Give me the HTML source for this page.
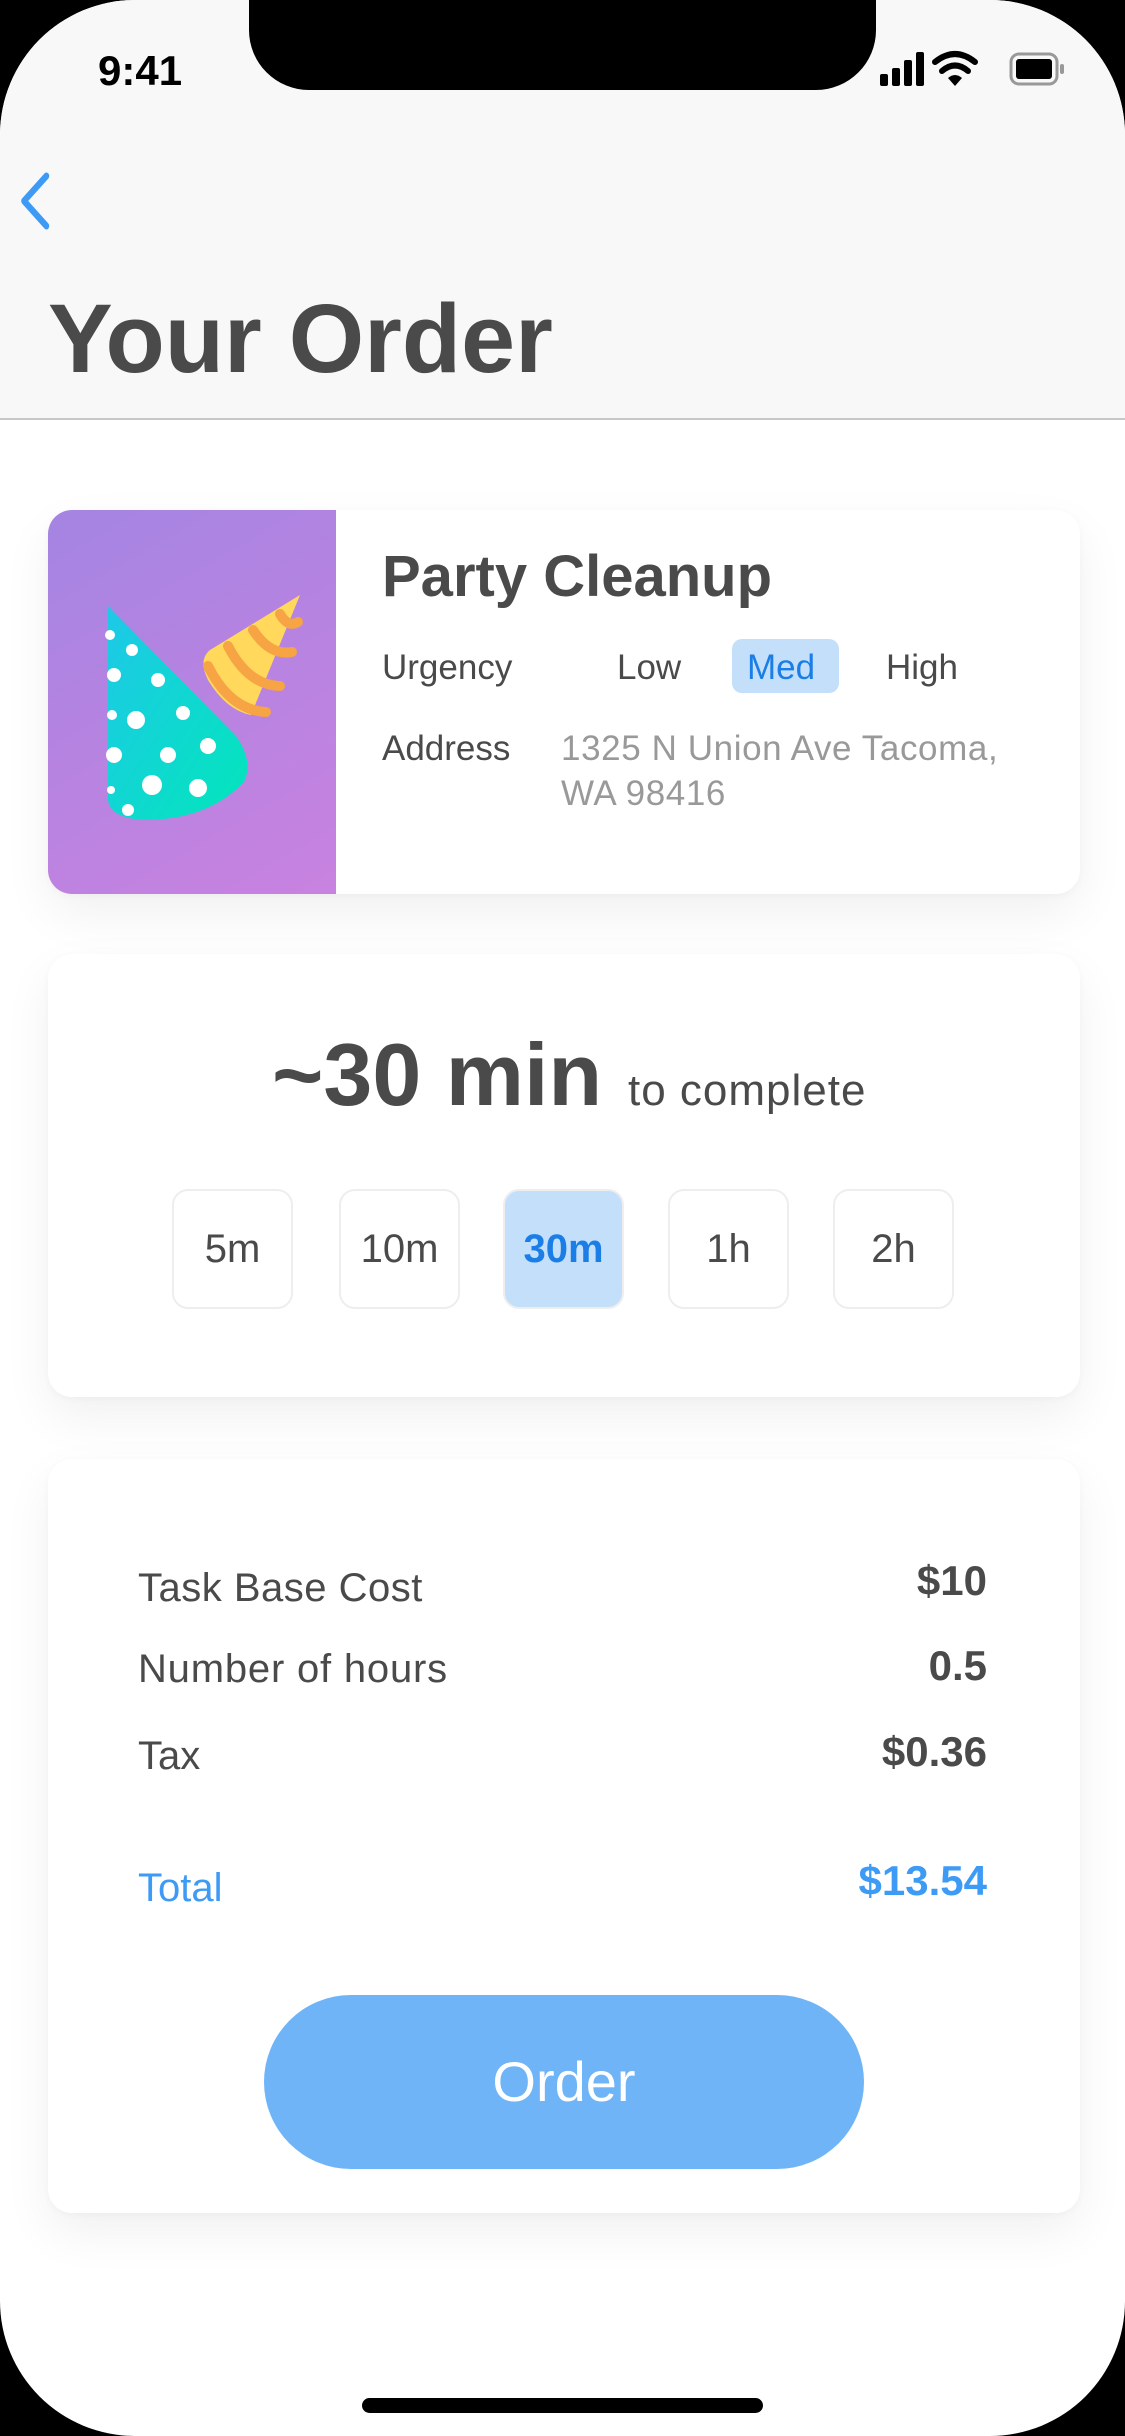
<!DOCTYPE html>
<html><head><meta charset="utf-8">
<style>
*{margin:0;padding:0;box-sizing:border-box}
html,body{width:1125px;height:2436px;background:#000;overflow:hidden}
#s{position:absolute;left:0;top:0;width:1125px;height:2436px;background:#fff;border-radius:135px;overflow:hidden;font-family:"Liberation Sans",sans-serif;color:#4a4a4a}
.t{position:absolute;white-space:nowrap;line-height:1}
.card{position:absolute;background:#fff;border-radius:24px;box-shadow:0 20px 50px rgba(0,0,0,0.06),0 2px 8px rgba(0,0,0,0.03)}
.box{position:absolute;top:1189px;width:121px;height:120px;border:2px solid #eee;border-radius:16px;background:#fff;font-size:40px;text-align:center;line-height:116px;color:#4a4a4a}
</style></head><body>
<div id="s">
<div style="position:absolute;left:0;top:0;width:1125px;height:420px;background:#f8f8f8;border-bottom:2px solid #c8c8c8"></div>
<div style="position:absolute;left:249px;top:-60px;width:627px;height:150px;background:#000;border-radius:0 0 60px 60px"></div>
<div class="t" style="left:98px;top:50px;font-size:42px;font-weight:bold;color:#000">9:41</div>
<svg style="position:absolute;left:880px;top:50px" width="200" height="40" viewBox="0 0 200 40">
<rect x="0" y="24" width="8" height="12" rx="2" fill="#000"/>
<rect x="12" y="18" width="8" height="18" rx="2" fill="#000"/>
<rect x="24" y="10" width="8" height="26" rx="2" fill="#000"/>
<rect x="36" y="2" width="8" height="34" rx="2" fill="#000"/>
<path d="M55 12 Q75 -4 95 12" stroke="#000" stroke-width="6" fill="none" stroke-linecap="round"/>
<path d="M62 21 Q75 10 88 21" stroke="#000" stroke-width="6" fill="none" stroke-linecap="round"/>
<path d="M68 28 L75 36 L82 28 Q75 22 68 28Z" fill="#000"/>
<rect x="131" y="4" width="46" height="30" rx="8" fill="none" stroke="#999" stroke-width="3"/>
<rect x="136" y="9" width="36" height="20" rx="3" fill="#000"/>
<rect x="180" y="14" width="4" height="10" rx="2" fill="#999"/>
</svg>
<svg style="position:absolute;left:20px;top:168px" width="50" height="66" viewBox="0 0 50 66"><path d="M38 8 L10 33 L38 58" stroke="#3d9af5" stroke-width="7" fill="none" stroke-linecap="round" stroke-linejoin="round" transform="translate(-4,0) scale(0.8,1)"/></svg>
<div class="t" style="left:48px;top:290px;font-size:97px;font-weight:bold">Your Order</div>

<div class="card" style="left:48px;top:510px;width:1032px;height:384px;overflow:hidden">
<div style="position:absolute;left:0;top:0;width:288px;height:384px;background:linear-gradient(150deg,#a584e2,#c982e0)">
<svg width="288" height="384" viewBox="0 0 288 384">
<defs><linearGradient id="g1" x1="0" y1="0" x2="1" y2="1"><stop offset="0" stop-color="#1ec8e8"/><stop offset="1" stop-color="#02e6bb"/></linearGradient></defs>
<path d="M60 96 L188 226 Q206 252 196 272 Q160 310 96 310 Q62 308 60 290 Z" fill="url(#g1)"/>
<g fill="#fff"><circle cx="62" cy="125" r="5"/><circle cx="84" cy="140" r="6"/><circle cx="66" cy="165" r="7"/><circle cx="110" cy="170" r="7"/><circle cx="64" cy="205" r="5"/><circle cx="88" cy="210" r="9"/><circle cx="135" cy="203" r="7"/><circle cx="66" cy="245" r="8"/><circle cx="120" cy="245" r="8"/><circle cx="160" cy="236" r="8"/><circle cx="104" cy="275" r="10"/><circle cx="150" cy="278" r="9"/><circle cx="63" cy="280" r="4"/><circle cx="80" cy="300" r="6"/></g>
<path d="M252 85 L203 205 Q178 200 160 170 Q150 150 162 140 Z" fill="#ffd85c"/>
<g stroke="#f7a445" stroke-width="10" fill="none" stroke-linecap="round"><path d="M232 104 Q240 118 250 112"/><path d="M205 120 Q222 146 244 142"/><path d="M180 136 Q200 175 232 176"/><path d="M160 156 Q182 200 218 202"/></g>
</svg></div>
<div class="t" style="left:334px;top:38px;font-size:58px;font-weight:bold">Party Cleanup</div>
<div class="t" style="left:334px;top:140px;font-size:35px">Urgency</div>
<div class="t" style="left:569px;top:140px;font-size:35px">Low</div>
<div style="position:absolute;left:684px;top:129px;width:107px;height:54px;background:#c4dffa;border-radius:10px"></div>
<div class="t" style="left:699px;top:140px;font-size:35px;color:#1b7ee6">Med</div>
<div class="t" style="left:838px;top:140px;font-size:35px">High</div>
<div class="t" style="left:334px;top:221px;font-size:35px">Address</div>
<div class="t" style="left:513px;top:221px;font-size:35px;color:#999;letter-spacing:0.6px">1325 N Union Ave Tacoma,</div>
<div class="t" style="left:513px;top:266px;font-size:35px;color:#999;letter-spacing:0.6px">WA 98416</div>
</div>

<div class="card" style="left:48px;top:954px;width:1032px;height:443px"></div>
<div class="t" style="left:272px;top:1031px;font-size:88px;font-weight:bold">~30 min</div>
<div class="t" style="left:628px;top:1069px;font-size:44px;letter-spacing:1px">to complete</div>
<div class="box" style="left:172px">5m</div>
<div class="box" style="left:339px">10m</div>
<div class="box" style="left:503px;background:#c4dffa;color:#1b7ee6;font-weight:bold">30m</div>
<div class="box" style="left:668px">1h</div>
<div class="box" style="left:833px">2h</div>

<div class="card" style="left:48px;top:1459px;width:1032px;height:754px"></div>
<div class="t" style="left:138px;top:1568px;font-size:40px;letter-spacing:0.5px">Task Base Cost</div>
<div class="t" style="left:138px;top:1649px;font-size:40px;letter-spacing:0.8px">Number of hours</div>
<div class="t" style="left:138px;top:1736px;font-size:40px">Tax</div>
<div class="t" style="left:138px;top:1868px;font-size:40px;color:#3d9af5">Total</div>
<div class="t" style="right:138px;top:1560px;font-size:42px;font-weight:bold">$10</div>
<div class="t" style="right:138px;top:1645px;font-size:42px;font-weight:bold">0.5</div>
<div class="t" style="right:138px;top:1731px;font-size:42px;font-weight:bold">$0.36</div>
<div class="t" style="right:138px;top:1860px;font-size:42px;font-weight:bold;color:#3d9af5">$13.54</div>
<div style="position:absolute;left:264px;top:1995px;width:600px;height:174px;border-radius:87px;background:#70b4f8;color:#fff;font-size:56px;text-align:center;line-height:174px">Order</div>

<div style="position:absolute;left:362px;top:2398px;width:401px;height:15px;border-radius:8px;background:#000"></div>
</div>
</body></html>
